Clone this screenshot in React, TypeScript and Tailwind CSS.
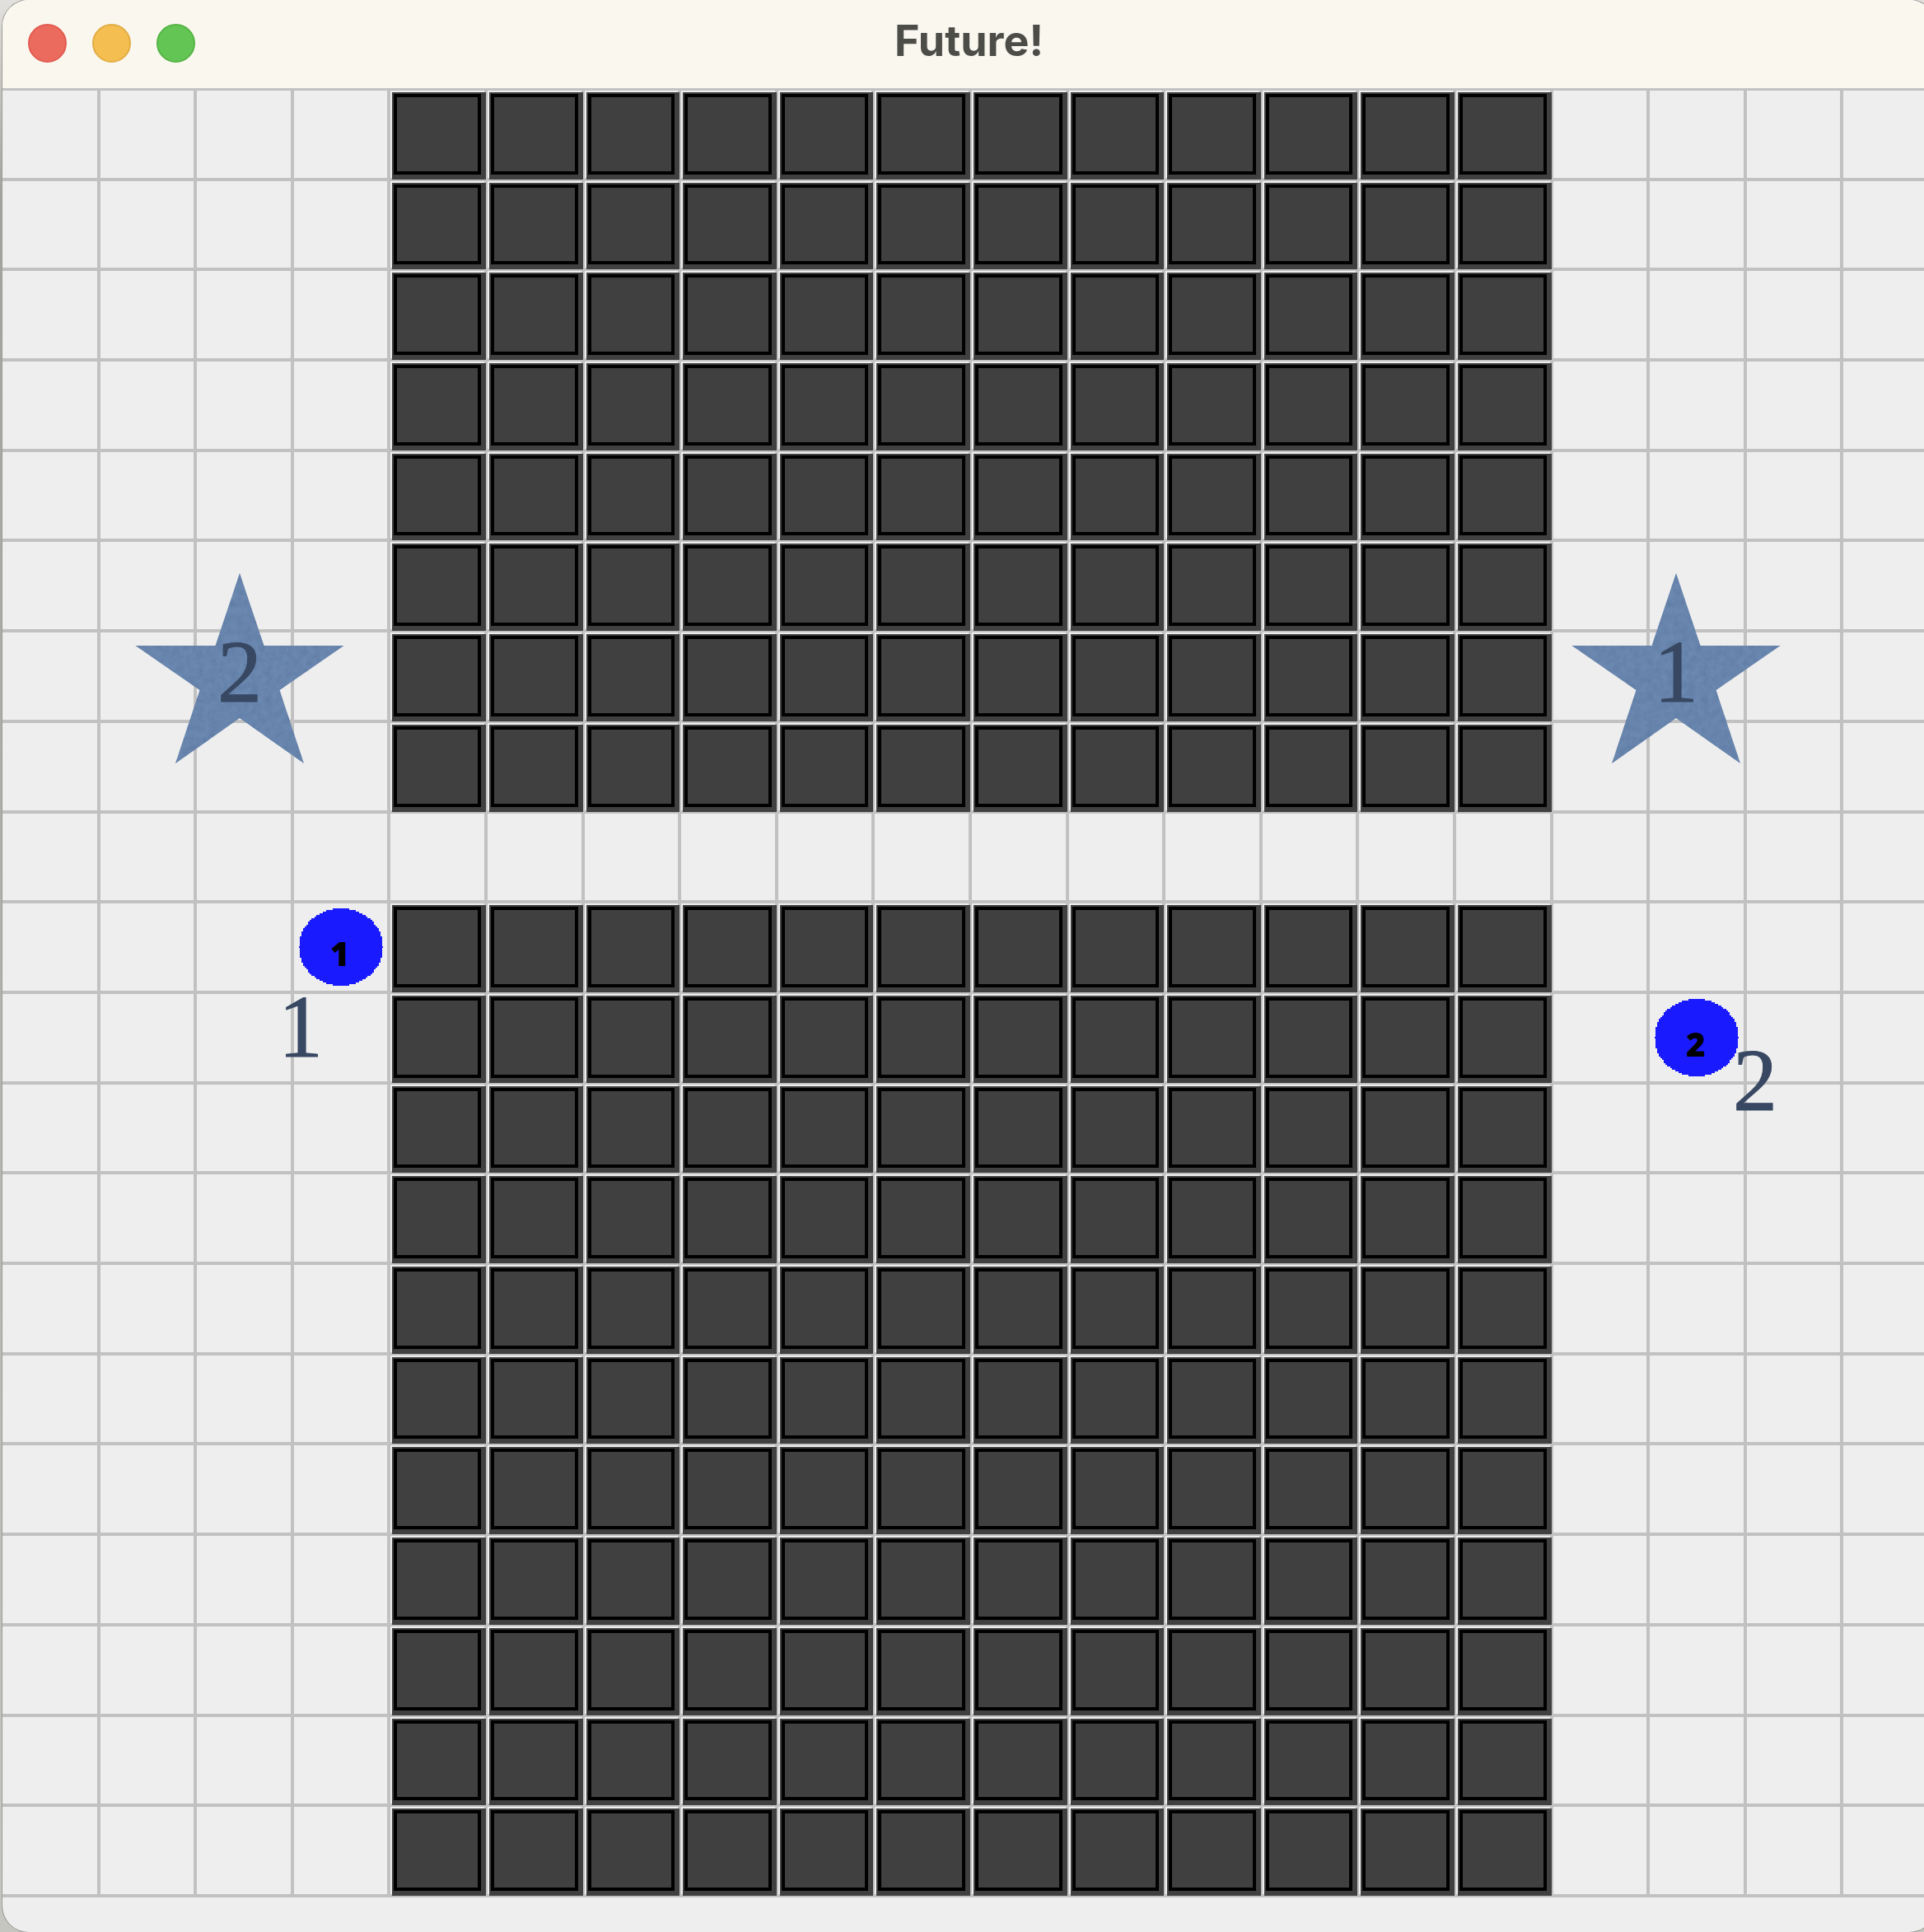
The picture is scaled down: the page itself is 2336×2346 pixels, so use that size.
const COLUMNS = 20;
const ROWS = 20;
const CORRIDOR_ROW = 8;
const FIRST_WALL = 4;
const LAST_WALL = 15;

type Robot = { column: number; row: number; label: string };

const robots: Robot[] = [
  { column: 3, row: 9, label: "1" },
  { column: 17, row: 10, label: "2" },
];

const discRows = Array.from({ length: 47 }, (_, i) => {
  const dy = (i * 2 + 1 - 47) / 47;
  const half = Math.max(2, Math.round((51 * Math.sqrt(1 - dy * dy)) / 2) * 2);
  return { y: i * 2, x: 51 - half, width: half * 2 };
});

function Disc({ label }: { label: string }) {
  return (
    <div className="relative z-10 flex h-[94px] w-[102px] items-center justify-center">
      <svg viewBox="0 0 102 94" className="absolute inset-0 h-full w-full" shapeRendering="crispEdges" aria-hidden="true">
        {discRows.map((r) => (
          <rect key={r.y} x={r.x} y={r.y} width={r.width} height={2} fill="#1a1aff" />
        ))}
      </svg>
      <span className="relative pt-4 pr-0.5 font-['Open_Sans',sans-serif] text-[40px] leading-none font-extrabold text-black">
        {label}
      </span>
    </div>
  );
}

function Wall() {
  return (
    <div className="relative z-10 -mr-0.5 -mb-0.5 flex grow bg-[#404040] pt-0.5 pr-1.5 pb-1.5 pl-0.5">
      <div className="grow border-4 border-black" />
    </div>
  );
}

function Cell({ column, row }: { column: number; row: number }) {
  const isWall = column >= FIRST_WALL && column <= LAST_WALL && row !== CORRIDOR_ROW;
  const robot = robots.find((r) => r.column === column && r.row === row);
  const edge = column === 0 ? "border-l-0" : "border-l-4";
  return (
    <div className={`flex min-h-0 min-w-0 border-t-4 border-[#c1c1c1] ${edge} ${isWall ? "pt-0.5 pl-0.5" : "items-center justify-center"}`}>
      {isWall && <Wall />}
      {robot && <Disc label={robot.label} />}
    </div>
  );
}

function Star({ label, id }: { label: string; id: string }) {
  return (
    <div className="relative flex h-[231px] w-[254px] items-center justify-center">
      <svg viewBox="0 0 254 231" className="absolute inset-0 h-full w-full" aria-hidden="true">
        <defs>
          <filter id={id} x="0" y="0" width="100%" height="100%" colorInterpolationFilters="sRGB">
            <feTurbulence type="fractalNoise" baseFrequency="0.12" numOctaves="3" seed="4" />
            <feColorMatrix values="0 0 0 0 0.36  0 0 0 0 0.47  0 0 0 0 0.63  1.2 0 0 0 -0.38" />
            <feComposite in2="SourceGraphic" operator="in" result="grain" />
            <feMerge>
              <feMergeNode in="SourceGraphic" />
              <feMergeNode in="grain" />
            </feMerge>
          </filter>
        </defs>
        <polygon
          filter={`url(#${id})`}
          fill="#6b88b0"
          points="127,0 156.5,88 253.5,88 175.5,142 205,231 127,176 49,231 78.5,142 0.5,88 97.5,88"
        />
      </svg>
      <span className="relative pt-2 font-['Liberation_Serif',serif] text-[108px] leading-none text-[#384862] [-webkit-text-stroke:1px_#384862]">
        {label}
      </span>
    </div>
  );
}

function TitleBar() {
  return (
    <header className="relative z-20 flex h-[108px] items-center border-b border-[#c4c6c7] bg-[#faf7ef] pb-0.5">
      <div className="absolute left-[31px] flex gap-[31px]">
        <button type="button" aria-label="Close" className="size-[47px] rounded-full border-2 border-[#e25b51] bg-[#ec6b5f]" />
        <button type="button" aria-label="Minimize" className="size-[47px] rounded-full border-2 border-[#e2ac44] bg-[#f4bf50]" />
        <button type="button" aria-label="Zoom" className="size-[47px] rounded-full border-2 border-[#54b443] bg-[#62c554]" />
      </div>
      <h1 className="grow pb-1.5 text-center font-['Inter',sans-serif] text-[52px] leading-none font-bold text-[#4c4d47]">Future!</h1>
    </header>
  );
}

export default function App() {
  const cells = Array.from({ length: COLUMNS * ROWS }, (_, i) => ({ column: i % COLUMNS, row: Math.floor(i / COLUMNS) }));
  return (
    <div className="flex min-h-screen overflow-hidden bg-linear-to-b from-[#e2e1dd] via-[#a3a29e] via-10% to-[#c6c6c1]">
      <main className="-mr-[14px] ml-[3px] min-w-0 grow overflow-hidden rounded-[32px] bg-[#eeeeee] shadow-[0_0_0_1px_#9a9a98]">
        <TitleBar />
        <div className="relative -mt-0.5 -mr-0.5 -ml-[3px]">
          <div className="grid aspect-[2352/2198] grid-cols-20 grid-rows-20 border-b-4 border-[#c1c1c1]">
            {cells.map((c) => (
              <Cell key={`${c.column}-${c.row}`} column={c.column} row={c.row} />
            ))}
          </div>
          <div className="absolute top-[590px] left-[164px] z-10">
            <Star label="2" id="grain-left" />
          </div>
          <div className="absolute top-[590px] left-[1908px] z-10">
            <Star label="1" id="grain-right" />
          </div>
          <span className="absolute top-[1087px] left-[338px] z-10 font-['Liberation_Serif',serif] text-[108px] leading-none text-[#384862] [-webkit-text-stroke:1px_#384862]">
            1
          </span>
          <span className="absolute top-[1152px] left-[2104px] z-10 font-['Liberation_Serif',serif] text-[108px] leading-none text-[#384862] [-webkit-text-stroke:1px_#384862]">
            2
          </span>
        </div>
      </main>
    </div>
  );
}
